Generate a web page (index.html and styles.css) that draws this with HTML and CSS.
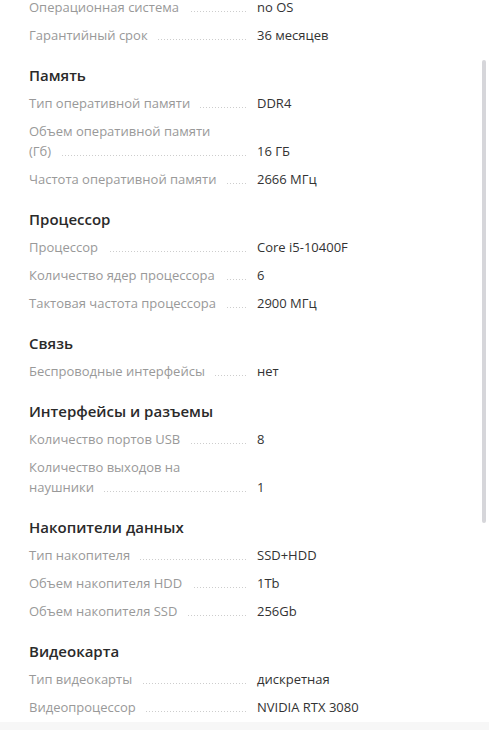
FILE: index.html
```html
<!DOCTYPE html>
<html lang="ru">
<head>
<meta charset="utf-8">
<link rel="stylesheet" href="styles.css">
</head>
<body>
<div class="specs">
  <div class="section">
    <div class="row"><div class="label"><span>Операционная система</span></div><div class="value">no OS</div></div>
    <div class="row"><div class="label"><span>Гарантийный срок</span></div><div class="value">36 месяцев</div></div>
  </div>
  <div class="section">
    <h3 class="title">Память</h3>
    <div class="row"><div class="label"><span>Тип оперативной памяти</span></div><div class="value">DDR4</div></div>
    <div class="row"><div class="label"><span>Объем оперативной памяти (Гб)</span></div><div class="value">16 ГБ</div></div>
    <div class="row"><div class="label"><span>Частота оперативной памяти</span></div><div class="value">2666 МГц</div></div>
  </div>
  <div class="section">
    <h3 class="title">Процессор</h3>
    <div class="row"><div class="label"><span>Процессор</span></div><div class="value">Core i5-10400F</div></div>
    <div class="row"><div class="label"><span>Количество ядер процессора</span></div><div class="value">6</div></div>
    <div class="row"><div class="label"><span>Тактовая частота процессора</span></div><div class="value">2900 МГц</div></div>
  </div>
  <div class="section">
    <h3 class="title">Связь</h3>
    <div class="row"><div class="label"><span>Беспроводные интерфейсы</span></div><div class="value">нет</div></div>
  </div>
  <div class="section">
    <h3 class="title">Интерфейсы и разъемы</h3>
    <div class="row"><div class="label"><span>Количество портов USB</span></div><div class="value">8</div></div>
    <div class="row"><div class="label"><span>Количество выходов на наушники</span></div><div class="value">1</div></div>
  </div>
  <div class="section">
    <h3 class="title">Накопители данных</h3>
    <div class="row"><div class="label"><span>Тип накопителя</span></div><div class="value">SSD+HDD</div></div>
    <div class="row"><div class="label"><span>Объем накопителя HDD</span></div><div class="value">1Tb</div></div>
    <div class="row"><div class="label"><span>Объем накопителя SSD</span></div><div class="value">256Gb</div></div>
  </div>
  <div class="section">
    <h3 class="title">Видеокарта</h3>
    <div class="row"><div class="label"><span>Тип видеокарты</span></div><div class="value">дискретная</div></div>
    <div class="row"><div class="label"><span>Видеопроцессор</span></div><div class="value">NVIDIA RTX 3080</div></div>
  </div>
</div>
<div class="footer"></div>
<div class="scroll-thumb"></div>
</body>
</html>
```

FILE: styles.css
```css
html, body {
  margin: 0;
  padding: 0;
  background: #fff;
  overflow: hidden;
}
body {
  font-family: "Open Sans", "Noto Sans", sans-serif;
  font-size: 13px;
  color: #333;
}
.specs {
  margin-top: -7px;
  padding: 0 20px 0 29px;
}
.section + .section {
  margin-top: 12px;
}
.title {
  margin: 0;
  padding: 4px 0;
  font-size: 15px;
  line-height: 20px;
  font-weight: 600;
  color: #2a2a2a;
}
.row {
  display: flex;
  align-items: flex-end;
  gap: 10px;
  padding: 4px 0;
  line-height: 20px;
}
.label {
  width: 204px;
  padding-right: 14px;
  flex: none;
  color: #999;
  background-image: linear-gradient(to right, #cdcdcd 1px, transparent 1px);
  background-size: 3px 1px;
  background-repeat: repeat-x;
  background-position: left bottom 5px;
}
.label span {
  background: #fff;
  padding-right: 10px;
}
.value {
  color: #333;
}
.footer {
  margin-top: 1px;
  height: 20px;
  background: #f7f7f7;
}
.scroll-thumb {
  position: fixed;
  left: 482px;
  top: 60px;
  width: 4px;
  height: 463px;
  border-radius: 2px;
  background: #d6d6da;
}
```
